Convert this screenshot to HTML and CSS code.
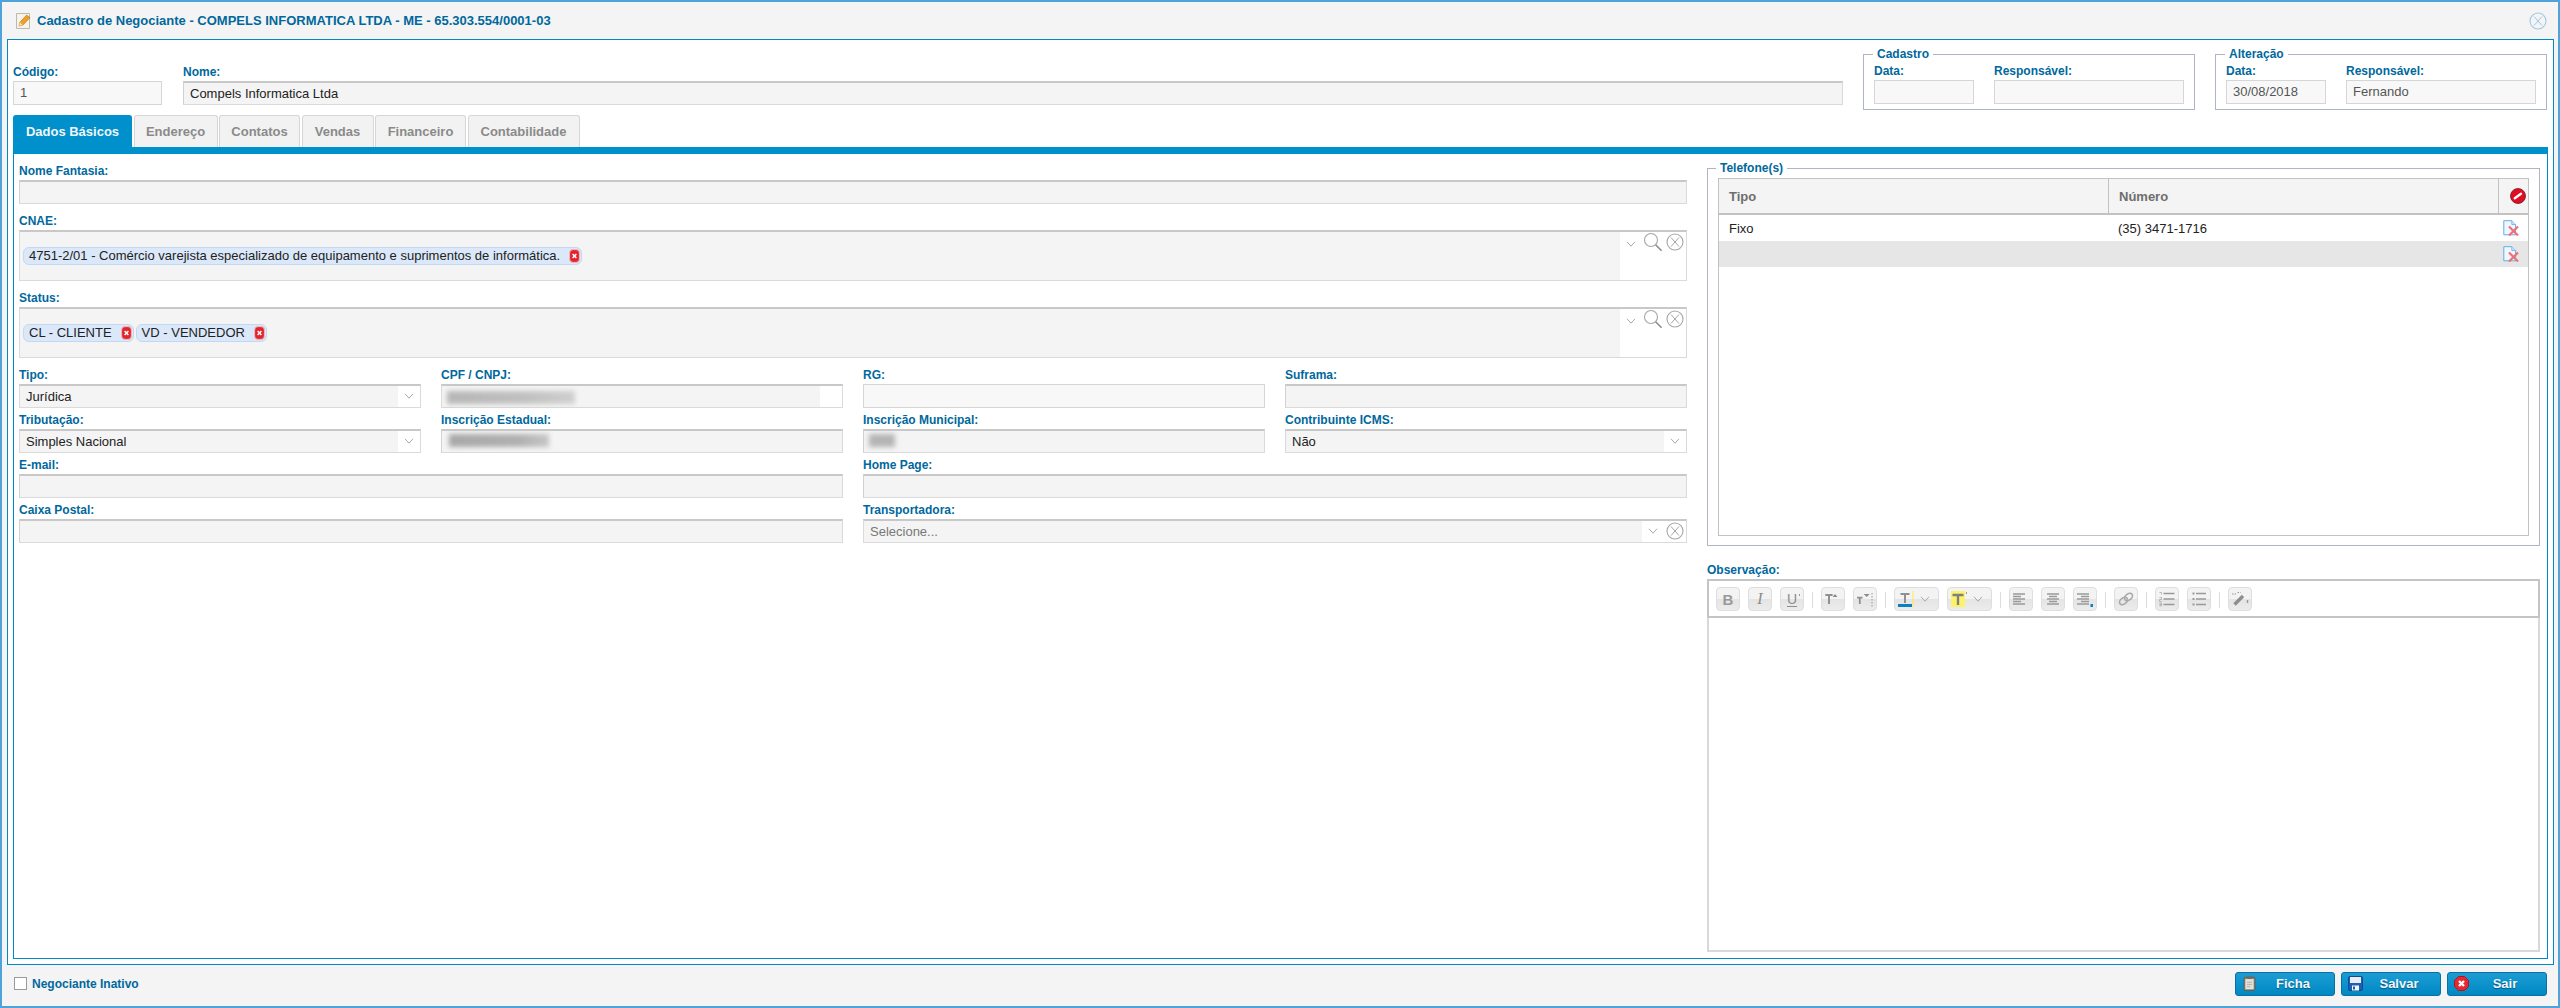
FILE: index.html
```html
<!DOCTYPE html>
<html lang="pt-BR">
<head>
<meta charset="utf-8">
<title>Cadastro de Negociante</title>
<link rel="stylesheet" href="styles.css">
</head>
<body>
<svg class="defs" width="0" height="0" aria-hidden="true">
  <defs>
    <symbol id="i-x" viewBox="0 0 18 18"><circle cx="9" cy="9" r="8" fill="none" stroke="currentColor" stroke-width="1.1"/><path d="M5 4.5l8 9M13 4.5l-8 9" fill="none" stroke="currentColor" stroke-width="1"/></symbol>
    <symbol id="i-arrow" viewBox="0 0 10 6"><path d="M1 .8l4 4.4 4-4.4" fill="none" stroke="#a8a8a8" stroke-width="1"/></symbol>
    <symbol id="i-search" viewBox="0 0 20 20"><circle cx="8" cy="8" r="6.5" fill="none" stroke="#a6a6a6" stroke-width="1.1"/><path d="M12.6 12.8l6 6" fill="none" stroke="#8e8e8e" stroke-width="1.6"/></symbol>
    <symbol id="i-chipx" viewBox="0 0 11 14"><rect x=".6" y=".6" width="9.800" height="12.800" rx="3.400" fill="#e2252d" stroke="#f2b8bc" stroke-width="1"/><path d="M3.600 5l3.800 4M7.400 5l-3.800 4" stroke="#fff" stroke-width="1.500"/></symbol>
    <symbol id="i-doc" viewBox="0 0 16 16"><path d="M.8.7h8l3.800 3.800v10.300H.8z" fill="#f0f6fd" stroke="#62ade8"/><path d="M8.800.7v3.800h3.800" fill="#d2e6f8" stroke="#62ade8" stroke-width=".8"/><path d="M6 6.500l9 9M15 6.500l-9 9" stroke="#ef7078" stroke-width="2.200"/></symbol>
  </defs>
</svg>

<div class="dialog">
  <header class="titlebar">
    <svg class="title-icon" viewBox="0 0 15 16" aria-hidden="true"><path d="M.5.5h13v15H.5z" fill="#f6f3ea" stroke="#bdb9ae"/><path d="M3 13l.9-3.700L10.700 2l3.200 2.800-7 7.200z" fill="#f0a024" stroke="#b86c10" stroke-width=".6"/><path d="M3 13l.9-3.700 3 2.700z" fill="#f6dcb0"/></svg>
    <span class="title-text">Cadastro de Negociante - COMPELS INFORMATICA LTDA - ME - 65.303.554/0001-03</span>
    <svg class="title-close" aria-hidden="true"><use href="#i-x"/></svg>
  </header>

  <main class="content">
    <section class="head">
      <div class="field f-code"><label class="lbl">Código:</label><div class="inp soft">1</div></div>
      <div class="field f-name"><label class="lbl">Nome:</label><div class="inp">Compels Informatica Ltda</div></div>
      <fieldset class="audit">
        <legend>Cadastro</legend>
        <div class="field f-date"><label class="lbl">Data:</label><div class="inp soft"></div></div>
        <div class="field f-resp"><label class="lbl">Responsável:</label><div class="inp soft"></div></div>
      </fieldset>
      <fieldset class="audit">
        <legend>Alteração</legend>
        <div class="field f-date"><label class="lbl">Data:</label><div class="inp soft">30/08/2018</div></div>
        <div class="field f-resp"><label class="lbl">Responsável:</label><div class="inp soft">Fernando</div></div>
      </fieldset>
    </section>

    <nav class="tabs">
      <a class="tab active t1">Dados Básicos</a>
      <a class="tab t2">Endereço</a>
      <a class="tab t3">Contatos</a>
      <a class="tab t4">Vendas</a>
      <a class="tab t5">Financeiro</a>
      <a class="tab t6">Contabilidade</a>
    </nav>

    <section class="panel">
      <div class="col-left">
        <div class="field"><label class="lbl">Nome Fantasia:</label><div class="inp"></div></div>
        <div class="field">
          <label class="lbl">CNAE:</label>
          <div class="multi">
            <div class="chips"><span class="chip">4751-2/01 - Comércio varejista especializado de equipamento e suprimentos de informática.<svg class="chip-x" aria-hidden="true"><use href="#i-chipx"/></svg></span></div>
            <div class="multi-tools">
              <svg class="arrow" aria-hidden="true"><use href="#i-arrow"/></svg>
              <svg class="search" aria-hidden="true"><use href="#i-search"/></svg>
              <svg class="clear" aria-hidden="true"><use href="#i-x"/></svg>
            </div>
          </div>
        </div>
        <div class="field">
          <label class="lbl">Status:</label>
          <div class="multi">
            <div class="chips"><span class="chip">CL - CLIENTE<svg class="chip-x" aria-hidden="true"><use href="#i-chipx"/></svg></span><span class="chip">VD - VENDEDOR<svg class="chip-x" aria-hidden="true"><use href="#i-chipx"/></svg></span></div>
            <div class="multi-tools">
              <svg class="arrow" aria-hidden="true"><use href="#i-arrow"/></svg>
              <svg class="search" aria-hidden="true"><use href="#i-search"/></svg>
              <svg class="clear" aria-hidden="true"><use href="#i-x"/></svg>
            </div>
          </div>
        </div>
        <div class="grid4">
          <div class="field"><label class="lbl">Tipo:</label><div class="select"><span class="sel-text">Jurídica</span><span class="sel-tool"><svg class="arrow" aria-hidden="true"><use href="#i-arrow"/></svg></span></div></div>
          <div class="field"><label class="lbl">CPF / CNPJ:</label><div class="select"><span class="sel-text"><i class="blur b-cpf"></i></span><span class="sel-tool"></span></div></div>
          <div class="field"><label class="lbl">RG:</label><div class="inp soft"></div></div>
          <div class="field"><label class="lbl">Suframa:</label><div class="inp"></div></div>

          <div class="field"><label class="lbl">Tributação:</label><div class="select"><span class="sel-text">Simples Nacional</span><span class="sel-tool"><svg class="arrow" aria-hidden="true"><use href="#i-arrow"/></svg></span></div></div>
          <div class="field"><label class="lbl">Inscrição Estadual:</label><div class="inp blurred"><i class="blur b-ie"></i></div></div>
          <div class="field"><label class="lbl">Inscrição Municipal:</label><div class="inp blurred"><i class="blur b-im"></i></div></div>
          <div class="field"><label class="lbl">Contribuinte ICMS:</label><div class="select"><span class="sel-text">Não</span><span class="sel-tool"><svg class="arrow" aria-hidden="true"><use href="#i-arrow"/></svg></span></div></div>

          <div class="field span2"><label class="lbl">E-mail:</label><div class="inp"></div></div>
          <div class="field span2"><label class="lbl">Home Page:</label><div class="inp"></div></div>

          <div class="field span2"><label class="lbl">Caixa Postal:</label><div class="inp"></div></div>
          <div class="field span2"><label class="lbl">Transportadora:</label><div class="select wide"><span class="sel-text muted">Selecione...</span><span class="sel-tool"><svg class="arrow" aria-hidden="true"><use href="#i-arrow"/></svg><svg class="clear" aria-hidden="true"><use href="#i-x"/></svg></span></div></div>
        </div>
      </div>

      <div class="col-right">
        <fieldset class="phones">
          <legend>Telefone(s)</legend>
          <div class="table">
            <div class="tr th"><span class="c1">Tipo</span><span class="c2">Número</span><span class="c3"><svg class="ban" viewBox="0 0 16 16" aria-hidden="true"><circle cx="8" cy="8" r="7.500" fill="#e00d24" stroke="#6d1a24" stroke-width=".8"/><path d="M4.800 10.200L11 5.800" stroke="#fff" stroke-width="2.400" stroke-linecap="round"/></svg></span></div>
            <div class="tr"><span class="c1">Fixo</span><span class="c2">(35) 3471-1716</span><span class="c3"><svg class="doc" aria-hidden="true"><use href="#i-doc"/></svg></span></div>
            <div class="tr alt"><span class="c1"></span><span class="c2"></span><span class="c3"><svg class="doc" aria-hidden="true"><use href="#i-doc"/></svg></span></div>
          </div>
        </fieldset>
        <div class="obs">
          <label class="lbl obs-lbl">Observação:</label>
          <div class="editor">
            <div class="toolbar">
              <span class="tb"><b class="g-b">B</b></span>
              <span class="tb"><i class="g-i">I</i></span>
              <span class="tb"><svg class="ic" viewBox="0 0 16 16"><path d="M15.500 3v2" stroke="#999"/></svg><u class="g-u">U</u></span>
              <span class="sep"></span>
              <span class="tb"><svg class="ic" viewBox="0 0 16 16"><path d="M.3 4h7.300M4 4v9" stroke="#909090" stroke-width="2" fill="none"/><path d="M7.600 6l2.400-3 2.400 3z" fill="#8a8a8a"/></svg></span>
              <span class="tb"><svg class="ic" viewBox="0 0 16 16"><path d="M0 6.700h5.600M2.800 6.700V13" stroke="#909090" stroke-width="1.800" fill="none"/><path d="M6.700 3h6l-3 3z" fill="#8a8a8a"/><path d="M15 2v14" stroke="#999" stroke-dasharray="1.500 1.500"/></svg></span>
              <span class="sep"></span>
              <span class="tb wide-tb"><svg class="ic" viewBox="0 0 16 16"><path d="M2.500 3h9M7 3v9" stroke="#909090" stroke-width="2" fill="none"/><path d="M0 14.500h14" stroke="#0a7fc4" stroke-width="3"/><path d="M15 0v16" stroke="#ffe94a" stroke-width="1"/></svg><svg class="tb-arrow" aria-hidden="true"><use href="#i-arrow"/></svg></span>
              <span class="tb wide-tb"><svg class="ic" viewBox="0 0 16 16"><rect x="0" y="0" width="14" height="16" fill="#fdf36b"/><path d="M1.500 4h11M7 4v10" stroke="#808080" stroke-width="2.400" fill="none"/><path d="M15.500 1v2" stroke="#999"/></svg><svg class="tb-arrow" aria-hidden="true"><use href="#i-arrow"/></svg></span>
              <span class="sep"></span>
              <span class="tb"><svg class="ic" viewBox="0 0 16 16"><path d="M0 3h12M0 5.500h8M0 8h12M0 10.500h8M0 13h12" stroke="#9a9a9a" stroke-width="1.500"/></svg></span>
              <span class="tb"><svg class="ic" viewBox="0 0 16 16"><path d="M2 3h12M4 5.500h8M2 8h12M4 10.500h8M2 13h12" stroke="#9a9a9a" stroke-width="1.500"/></svg></span>
              <span class="tb"><svg class="ic" viewBox="0 0 16 16"><path d="M0 3h12M4 5.500h8M0 8h12M4 10.500h8M0 13h12" stroke="#9a9a9a" stroke-width="1.500"/><rect x="13.500" y="13" width="2.500" height="3" fill="#0a7fc4"/></svg></span>
              <span class="sep"></span>
              <span class="tb"><svg class="ic" viewBox="0 0 16 16"><ellipse cx="5.500" cy="10" rx="4.500" ry="3" transform="rotate(-38 5.500 10)" fill="none" stroke="#a8a8a8" stroke-width="1.600"/><ellipse cx="10.500" cy="6" rx="4.500" ry="3" transform="rotate(-38 10.500 6)" fill="none" stroke="#a8a8a8" stroke-width="1.600"/></svg></span>
              <span class="sep"></span>
              <span class="tb"><svg class="ic" viewBox="0 0 16 16"><path d="M4.500 2.500h11M4.500 8h11M4.500 13.500h11" stroke="#999" stroke-width="1.500"/><path d="M.5 1.500h2v2M.5 6.500h2v2h-2v2h2M.5 12h2v1.500h-2 2V15h-2" fill="none" stroke="#aaa" stroke-width=".8"/></svg></span>
              <span class="tb"><svg class="ic" viewBox="0 0 16 16"><path d="M5 2.500h10M5 8h10M5 13.500h10" stroke="#999" stroke-width="1.500"/><path d="M1.500 1.500h2v2h-2zM1.500 7h2v2h-2zM1.500 12.500h2v2h-2z" fill="#999"/></svg></span>
              <span class="sep"></span>
              <span class="tb"><svg class="ic" viewBox="0 0 16 16"><path d="M2.500 13.500L11 5" stroke="#8e8e8e" stroke-width="3.400"/><path d="M0 3h4M5.500 1.500h3" stroke="#999" stroke-dasharray="1.500 1"/><path d="M15.500 9v3" stroke="#999" stroke-width="1.400"/></svg></span>
            </div>
            <div class="editor-area"></div>
          </div>
        </div>
      </div>
    </section>
  </main>

  <footer class="footer">
    <label class="check"><span class="box"></span>Negociante Inativo</label>
    <div class="actions">
      <button class="btn"><svg class="btn-ic" viewBox="0 0 14 17" aria-hidden="true"><rect x=".8" y="1.500" width="12.400" height="15" rx="1" fill="#8d8678" stroke="#5f5a50"/><rect x="2.300" y="3.500" width="9.400" height="11.500" fill="#e4e2dc"/><rect x="4.500" y=".3" width="5" height="3" fill="#6f6a62"/><path d="M4 7h6M4 9.500h6M4 12h4" stroke="#b0aba0"/></svg><span>Ficha</span></button>
      <button class="btn"><svg class="btn-ic" viewBox="0 0 15 15" aria-hidden="true"><rect x=".5" y=".5" width="14" height="14" rx="1.500" fill="#1e5fb4" stroke="#144a8c"/><rect x="2" y="1" width="11" height="6" fill="#e6eef8"/><rect x="4" y="9.500" width="7" height="5" fill="#f4f6fa"/><rect x="5" y="10.500" width="2" height="3" fill="#1e5fb4"/></svg><span>Salvar</span></button>
      <button class="btn"><svg class="btn-ic" viewBox="0 0 15 15" aria-hidden="true"><path d="M4.500.5h6l4 4v6l-4 4h-6l-4-4v-6z" fill="#e32934" stroke="#a81620"/><path d="M5 5l5 5M10 5l-5 5" stroke="#fff" stroke-width="2.400"/></svg><span>Sair</span></button>
    </div>
  </footer>
</div>
</body>
</html>
```

FILE: styles.css
```css
* { box-sizing: border-box; }
html, body { margin: 0; padding: 0; height: 100%; }
body { font-family: "Liberation Sans", Arial, sans-serif; font-size: 13px; color: #222; background: #fff; overflow: hidden; }
.defs { position: absolute; }

.dialog { height: 1008px; border: 2px solid #4fa3d8; background: #f4f4f4; display: flex; flex-direction: column; }

.titlebar { height: 37px; flex: none; display: flex; align-items: center; padding-left: 14px; padding-right: 11px; }
.title-icon { width: 15px; height: 16px; margin-right: 6px; }
.title-text { font-size: 13px; font-weight: bold; color: #00689d; flex: 1; }
.title-close { width: 18px; height: 18px; color: #9fc8e6; }

.content { flex: 1; min-height: 0; margin: 0 4px 0 5px; border: 1px solid #0088c9; background: #fff; padding: 0 5px 5px; display: flex; flex-direction: column; }

.lbl { display: block; height: 21px; padding-top: 5px; font-size: 12px; line-height: 15px; font-weight: bold; color: #00689d; }
.inp { height: 24px; background: #f4f4f4; border: 1px solid #dadada; border-top: 2px solid #c8c8c8; border-left-color: #d2d2d2; padding-left: 6px; line-height: 21px; font-size: 13px; color: #222; overflow: hidden; }
.inp.soft { background: #f8f8f8; border: 1px solid #d6d6d6; color: #555; line-height: 22px; }
.inp.blurred { position: relative; }

.head { height: 75px; flex: none; display: flex; }
.f-code { width: 149px; margin-top: 20px; }
.f-name { width: 1660px; margin: 20px 0 0 21px; }
.audit { height: 63px; margin: 7px 0 0 20px; padding: 0 0 0 10px; width: 332px; border: 1px solid #aeb6c6; display: flex; min-width: 0; }
.audit legend { margin-left: -1px; padding: 0 4px; font-size: 12px; line-height: 14px; color: #00689d; font-weight: bold; }
.audit .lbl { margin-top: -2px; }
.f-date { width: 100px; }
.f-resp { width: 190px; margin-left: 20px; }

.tabs { height: 32px; flex: none; display: flex; gap: 1.500px; }
.tab { height: 32px; display: flex; align-items: center; justify-content: center; font-size: 13px; font-weight: bold; color: #8a8a8a; background: #f2f2f2; border: 1px solid #d6d6d6; border-bottom: 0; border-radius: 3px 3px 0 0; }
.tab.active { background: #0090cc; border-color: #0090cc; color: #f2f6f9; }
.t1 { width: 119px; } .t2 { width: 84px; } .t3 { width: 81px; } .t4 { width: 72px; } .t5 { width: 91px; } .t6 { width: 112px; }

.panel { flex: 1; min-height: 0; border: 1px solid #0088c9; border-top: 7px solid #0090cc; padding: 5px 5px 6px; display: grid; grid-template-columns: 1668px 833px; column-gap: 20px; }
.col-left { display: flex; flex-direction: column; gap: 5px; }
.grid4 { display: grid; grid-template-columns: repeat(4, 402px); column-gap: 20px; }
.span2 { grid-column: span 2; }

.multi { height: 51px; display: flex; background: #f4f4f4; border: 1px solid #dadada; border-top: 2px solid #c8c8c8; }
.chips { flex: 1; display: flex; align-items: flex-start; gap: 2px; padding: 15px 0 0 3px; }
.chip { height: 18px; display: inline-flex; align-items: center; padding: 0 1px 1px 5px; background: #dbe8f9; border: 1px solid #c4d7f0; border-radius: 6px; font-size: 13px; color: #222; white-space: nowrap; }
.chip-x { width: 11px; height: 14px; margin-left: 9px; }
.multi-tools { width: 66px; flex: none; background: #fff; position: relative; }
.multi-tools .arrow { position: absolute; left: 6px; top: 9px; }
.multi-tools .search { position: absolute; left: 23px; top: 0; width: 20px; height: 20px; }
.multi-tools .clear { position: absolute; left: 46px; top: 1px; }
.arrow { width: 10px; height: 6px; }
.clear { width: 18px; height: 18px; color: #a6a6a6; }

.select { height: 24px; display: flex; background: #fff; border: 1px solid #dadada; border-top: 2px solid #c8c8c8; }
.sel-text { flex: 1; background: #f4f4f4; padding-left: 6px; line-height: 22px; color: #222; }
.sel-text.muted { color: #777; }
.sel-tool { width: 22px; flex: none; display: flex; align-items: center; justify-content: center; gap: 8px; padding-bottom: 2px; }
.wide .sel-tool { width: 44px; justify-content: flex-start; padding-left: 6px; }
.blur { display: block; filter: blur(2.500px); }
.b-cpf { width: 128px; height: 13px; margin: 5px 0 0 -1px; background: linear-gradient(90deg, #b6b6b6, #c0c0c0 60%, #cfcfcf); }
.b-ie { width: 100px; height: 13px; margin: 3px 0 0 1px; background: linear-gradient(90deg, #a8a8a8, #b0b0b0 70%, #c6c6c6); }
.b-im { width: 26px; height: 13px; margin: 3px 0 0 -1px; background: #b4b4b4; }

.col-right { display: flex; flex-direction: column; min-width: 0; }
.phones { height: 385px; margin: 2px 0 0; padding: 0 10px 10px 10px; border: 1px solid #aeb6c6; min-width: 0; flex: none; }
.phones legend { margin-left: -2px; padding: 0 4px; font-size: 12px; line-height: 14px; color: #00689d; font-weight: bold; }
.table { height: 358px; margin-top: 3px; border: 1px solid #c2c2c2; background: #fff; }
.tr { display: grid; grid-template-columns: 389px 390px 1fr; height: 26px; align-items: center; font-size: 13px; }
.tr .c1, .tr .c2 { padding-left: 10px; }
.tr .c3 { display: flex; justify-content: center; padding-right: 4px; }
.th { height: 36px; background: #f4f4f4; border-bottom: 2px solid #c2c2c2; font-weight: bold; color: #6e6e6e; }
.th span { height: 100%; display: flex; align-items: center; border-left: 1px solid #c2c2c2; }
.th span:first-child { border-left: 0; }
.th .c3 { padding: 0 0 0 8px; }
.alt { background: #e6e6e6; }
.ban { width: 16px; height: 16px; }
.doc { width: 16px; height: 16px; }

.obs { flex: 1; min-height: 0; display: flex; flex-direction: column; }
.obs-lbl { height: 33px; padding-top: 17px; flex: none; }
.editor { flex: 1; min-height: 0; display: flex; flex-direction: column; }
.toolbar { height: 39px; flex: none; background: #fff; border: 2px solid #c4c4c4; padding: 6px 0 0 7px; display: flex; gap: 8px; align-items: flex-start; }
.tb { width: 24px; height: 24px; flex: none; position: relative; border: 1px solid #dedede; border-radius: 4px; background: linear-gradient(#f3f3f3 52%, #e4e4e4 52%, #ececec); display: flex; align-items: center; justify-content: center; color: #8c8c8c; }
.g-b { font: bold 15px "Liberation Sans", sans-serif; color: #999; }
.g-i { font: italic 16px "Liberation Serif", serif; color: #8c8c8c; }
.g-u { position: absolute; left: 6px; top: 3px; font: 14px "Liberation Sans", sans-serif; color: #8c8c8c; text-underline-offset: 2px; }
.wide-tb { width: 45px; justify-content: flex-start; padding-left: 3px; gap: 6px; }
.ic { width: 16px; height: 16px; flex: none; overflow: visible; }
.tb-arrow { width: 10px; height: 6px; }
.sep { width: 1px; height: 16px; margin-top: 5px; background: #dcdcdc; flex: none; }
.editor-area { flex: 1; background: #fff; border: 1px solid #d8d8d8; border-top: 0; border-width: 0 2px 2px 2px; }

.footer { height: 41px; flex: none; display: flex; align-items: center; justify-content: space-between; padding: 0 11px 4px 12px; }
.check { display: flex; align-items: center; font-size: 12px; font-weight: bold; color: #00689d; }
.box { width: 13px; height: 13px; border: 1px solid #9a9a9a; background: #fff; margin-right: 5px; }
.actions { display: flex; gap: 6px; }
.btn { width: 100px; height: 24px; padding: 0 5px 0 6px; display: flex; align-items: center; border: 1px solid #0a6fa5; border-radius: 3px; background: linear-gradient(#1b9dd3, #0088c4); color: #f2f6f9; font: bold 13px "Liberation Sans", sans-serif; text-shadow: 0 1px 1px #04567f; }
.btn span { flex: 1; text-align: center; }
.btn-ic { width: 15px; height: 15px; flex: none; }
```
